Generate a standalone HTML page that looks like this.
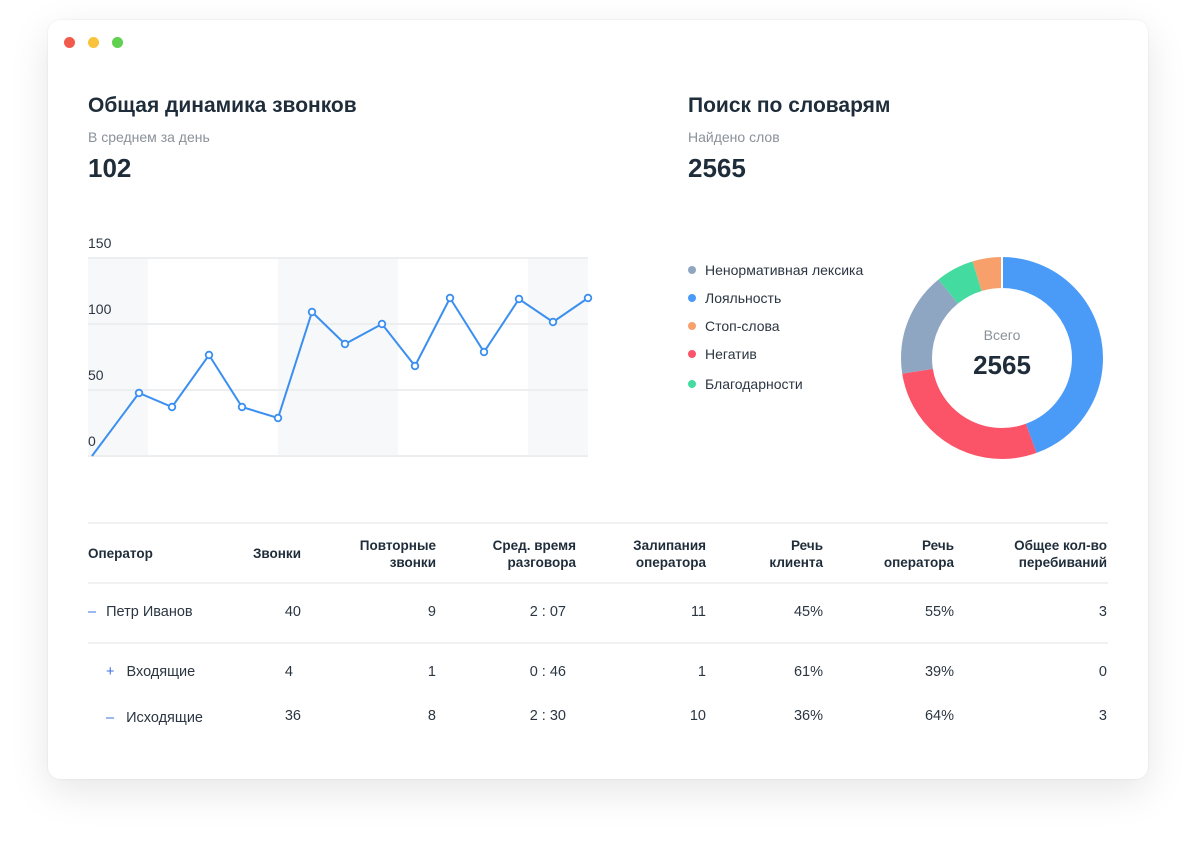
<!DOCTYPE html><html><head><meta charset="utf-8"><style>
body{margin:0;width:1196px;height:856px;background:#fff;font-family:"Liberation Sans","DejaVu Sans",sans-serif;color:#1f2d3a;position:relative;overflow:hidden}
.card{position:absolute;left:48px;top:20px;width:1100px;height:759px;background:#fff;border-radius:12px;box-shadow:0 12px 40px rgba(0,0,0,.10),0 0 2px rgba(0,0,0,.08)}
.dot{position:absolute;top:37px;width:11px;height:11px;border-radius:50%}
.a{position:absolute;white-space:nowrap}
h1{position:absolute;margin:0;font-size:21px;font-weight:bold}
.sub{font-size:14px;color:#8a9199}
.big{font-size:26px;font-weight:bold}
.lg{font-size:14px;color:#2b3642}
.lg i{display:inline-block;width:8px;height:8px;border-radius:50%;margin-right:9px;vertical-align:1px}
.th{font-size:13.5px;font-weight:bold;text-align:right;line-height:17px}
.td{font-size:14.5px;color:#2b3642;text-align:right}
.hr{position:absolute;left:88px;width:1020px;height:2px;background:#f0f1f3}
</style></head><body>
<div class="card"></div>
<div class="dot" style="left:64px;background:#f25a4c"></div>
<div class="dot" style="left:88px;background:#f9c23c"></div>
<div class="dot" style="left:112px;background:#5fd04f"></div>
<h1 style="left:88px;top:94px">Общая динамика звонков</h1>
<div class="a sub" style="left:88px;top:129px">В среднем за день</div>
<div class="a big" style="left:88px;top:153px">102</div>
<h1 style="left:688px;top:94px">Поиск по словарям</h1>
<div class="a sub" style="left:688px;top:129px">Найдено слов</div>
<div class="a big" style="left:688px;top:153px">2565</div>
<svg class="a" style="left:0;top:0" width="600" height="470">
<rect x="88" y="258" width="60" height="198" fill="#f7f8fa"/>
<rect x="278" y="258" width="120" height="198" fill="#f7f8fa"/>
<rect x="528" y="258" width="60" height="198" fill="#f7f8fa"/>
<g fill="#eceef0"><rect x="88" y="257" width="500" height="2"/><rect x="88" y="323" width="500" height="2"/><rect x="88" y="389" width="500" height="2"/><rect x="88" y="455" width="500" height="2"/></g>
<g font-size="14" fill="#2b3642" font-family="Liberation Sans,sans-serif"><text x="88" y="248">150</text><text x="88" y="314">100</text><text x="88" y="380">50</text><text x="88" y="446">0</text></g>
<polyline fill="none" stroke="#3b8ff0" stroke-width="2" points="92,456 139,393 172,407 209,355 242,407 278,418 312,312 345,344 382,324 415,366 450,298 484,352 519,299 553,322 588,298"/>
<g fill="#fff" stroke="#3b8ff0" stroke-width="1.8"><circle cx="139" cy="393" r="3.3"/><circle cx="172" cy="407" r="3.3"/><circle cx="209" cy="355" r="3.3"/><circle cx="242" cy="407" r="3.3"/><circle cx="278" cy="418" r="3.3"/><circle cx="312" cy="312" r="3.3"/><circle cx="345" cy="344" r="3.3"/><circle cx="382" cy="324" r="3.3"/><circle cx="415" cy="366" r="3.3"/><circle cx="450" cy="298" r="3.3"/><circle cx="484" cy="352" r="3.3"/><circle cx="519" cy="299" r="3.3"/><circle cx="553" cy="322" r="3.3"/><circle cx="588" cy="298" r="3.3"/></g>
</svg>
<div class="a lg" style="left:688px;top:262px"><i style="background:#8fa6c2"></i>Ненормативная лексика</div>
<div class="a lg" style="left:688px;top:290px"><i style="background:#4a9bf8"></i>Лояльность</div>
<div class="a lg" style="left:688px;top:318px"><i style="background:#f7a06b"></i>Стоп-слова</div>
<div class="a lg" style="left:688px;top:346px"><i style="background:#fb5469"></i>Негатив</div>
<div class="a lg" style="left:688px;top:376px"><i style="background:#44dba0"></i>Благодарности</div>
<svg class="a" style="left:900px;top:256px" width="204" height="204" viewBox="0 0 204 204">
<g transform="rotate(-90 102 102)" fill="none" stroke-width="31">
<circle cx="102" cy="102" r="85.5" stroke="#4a9bf8" stroke-dasharray="238.7 600"/>
<circle cx="102" cy="102" r="85.5" stroke="#fb5469" stroke-dasharray="0 238.7 150.7 600"/>
<circle cx="102" cy="102" r="85.5" stroke="#8fa6c2" stroke-dasharray="0 389.4 89.5 600"/>
<circle cx="102" cy="102" r="85.5" stroke="#44dba0" stroke-dasharray="0 478.9 32.8 600"/>
<circle cx="102" cy="102" r="85.5" stroke="#f7a06b" stroke-dasharray="0 511.7 25.5 600"/>
</g>
<g stroke="#fff" stroke-width="2"><line x1="102" y1="0" x2="102" y2="32"/></g>
</svg>
<div class="a sub" style="left:962px;top:327px;width:80px;text-align:center">Всего</div>
<div class="a big" style="left:952px;top:350px;width:100px;text-align:center">2565</div>
<div class="hr" style="top:522px"></div>
<div class="hr" style="top:582px"></div>
<div class="hr" style="top:642px"></div>
<div class="a th" style="left:88px;top:545px;text-align:left">Оператор</div>
<div class="a th" style="right:895px;top:545px">Звонки</div>
<div class="a th" style="right:760px;top:537px">Повторные<br>звонки</div>
<div class="a th" style="right:620px;top:537px">Сред. время<br>разговора</div>
<div class="a th" style="right:490px;top:537px">Залипания<br>оператора</div>
<div class="a th" style="right:373px;top:537px">Речь<br>клиента</div>
<div class="a th" style="right:242px;top:537px">Речь<br>оператора</div>
<div class="a th" style="right:89px;top:537px">Общее кол-во<br>перебиваний</div>
<div class="a td" style="left:88px;top:604px;text-align:left"><span style="color:#3b6fe0;margin-right:10px">–</span>Петр Иванов</div>
<div class="a td" style="left:106px;top:664px;text-align:left"><span style="color:#3b6fe0;margin-right:12px">+</span>Входящие</div>
<div class="a td" style="left:106px;top:710px;text-align:left"><span style="color:#3b6fe0;margin-right:12px">–</span>Исходящие</div>
<div class="a td" style="right:895px;top:604px">40</div><div class="a td" style="right:760px;top:604px">9</div><div class="a td" style="right:630px;top:604px">2 : 07</div><div class="a td" style="right:490px;top:604px">11</div><div class="a td" style="right:373px;top:604px">45%</div><div class="a td" style="right:242px;top:604px">55%</div><div class="a td" style="right:89px;top:604px">3</div>
<div class="a td" style="right:903px;top:664px">4</div><div class="a td" style="right:760px;top:664px">1</div><div class="a td" style="right:630px;top:664px">0 : 46</div><div class="a td" style="right:490px;top:664px">1</div><div class="a td" style="right:373px;top:664px">61%</div><div class="a td" style="right:242px;top:664px">39%</div><div class="a td" style="right:89px;top:664px">0</div>
<div class="a td" style="right:895px;top:708px">36</div><div class="a td" style="right:760px;top:708px">8</div><div class="a td" style="right:630px;top:708px">2 : 30</div><div class="a td" style="right:490px;top:708px">10</div><div class="a td" style="right:373px;top:708px">36%</div><div class="a td" style="right:242px;top:708px">64%</div><div class="a td" style="right:89px;top:708px">3</div>
</body></html>
